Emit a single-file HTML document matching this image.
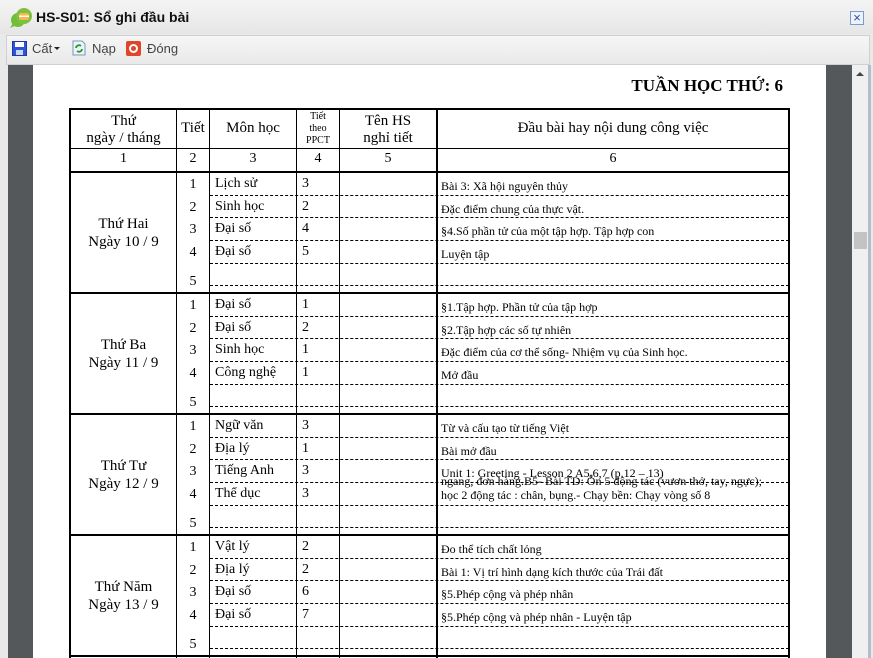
<!DOCTYPE html>
<html><head><meta charset="utf-8"><style>
*{margin:0;padding:0;box-sizing:border-box}
body{width:873px;height:658px;overflow:hidden;background:#e9e9e9;font-family:"Liberation Sans",sans-serif;position:relative}
.a{position:absolute}
.s{font-family:"Liberation Serif",serif;color:#000}
.hl{position:absolute;height:0;border-top:1px dashed #000}
.c{text-align:center}
</style></head><body>
<div class="a" style="left:0;top:0;width:873px;height:34px;background:linear-gradient(#f4f4f4,#e6e6e6)"></div>
<svg class="a" style="left:9px;top:7px" width="24" height="22" viewBox="0 0 24 22"><circle cx="9" cy="13" r="7" fill="#6fbf3a"/><circle cx="15" cy="9" r="8" fill="#7cc142"/><rect x="10" y="6" width="10" height="7" rx="2" fill="#f7b74a"/><rect x="10" y="8.5" width="10" height="1.5" fill="#fff"/><path d="M4 16 L1 21 L8 18Z" fill="#6fbf3a"/></svg>
<div class="a" style="left:36px;top:9px;font-size:14px;font-weight:bold;color:#111">HS-S01: Sổ ghi đầu bài</div>
<div class="a" style="left:850px;top:11px;width:14px;height:14px;border:1px solid #7b9bd0;background:#eef3fb;color:#2a4d9a;font-size:13px;line-height:12px;text-align:center">×</div>
<div class="a" style="left:6px;top:35px;width:864px;height:30px;background:linear-gradient(#f6f6f6,#e9e9e9);border:1px solid #d0d0d0"></div>
<svg class="a" style="left:12px;top:41px" width="15" height="15" viewBox="0 0 15 15"><rect x="0.5" y="0.5" width="14" height="14" fill="#2f55d4" stroke="#1c3aa0"/><rect x="3" y="1" width="9" height="5" fill="#fff"/><rect x="4" y="9" width="7" height="5" fill="#c9d6f5"/></svg>
<div class="a" style="left:32px;top:41px;font-size:13px;color:#444">Cất</div>
<div class="a" style="left:54px;top:47px;width:0;height:0;border-left:3px solid transparent;border-right:3px solid transparent;border-top:3px solid #222"></div>
<svg class="a" style="left:72px;top:40px" width="14" height="16" viewBox="0 0 14 16"><path d="M1 1H10L13 4V15H1Z" fill="#eef3fa" stroke="#7a96c0"/><path d="M4 8a3 3 0 0 1 5-2" stroke="#2a9b2a" stroke-width="1.8" fill="none"/><path d="M10 9a3 3 0 0 1-5 2" stroke="#2a9b2a" stroke-width="1.8" fill="none"/></svg>
<div class="a" style="left:92px;top:41px;font-size:13px;color:#444">Nạp</div>
<div class="a" style="left:126px;top:41px;width:15px;height:15px;background:#e0452a;border-radius:2px"></div>
<div class="a" style="left:129px;top:44px;width:9px;height:9px;border:2px solid #fff;border-radius:50%"></div>
<div class="a" style="left:147px;top:41px;font-size:13px;color:#444">Đóng</div>
<div class="a" style="left:8px;top:65px;width:844px;height:593px;background:#54585b"></div>
<div class="a" style="left:33px;top:65px;width:793px;height:593px;background:#fff"></div>
<div class="a" style="left:852px;top:65px;width:16px;height:593px;background:#f0f0f0"></div>
<div class="a" style="left:868px;top:65px;width:3px;height:593px;background:#b4bccb"></div>
<div class="a" style="left:856px;top:72px;width:0;height:0;border-left:4px solid transparent;border-right:4px solid transparent;border-bottom:4px solid #444"></div>
<div class="a" style="left:854px;top:232px;width:13px;height:17px;background:#c3c3c3"></div>

<div class="a s" style="left:560px;top:76px;width:223px;text-align:right;font-size:17px;font-weight:bold">TUẦN HỌC THỨ: 6</div>

<div class="a" style="left:69px;top:108px;width:721px;height:550px;border:2px solid #000;border-bottom:none"></div>
<div class="a" style="left:176px;top:108px;width:1px;height:550px;background:#000"></div>
<div class="a" style="left:209px;top:108px;width:1px;height:550px;background:#000"></div>
<div class="a" style="left:296px;top:108px;width:1px;height:550px;background:#000"></div>
<div class="a" style="left:339px;top:108px;width:1px;height:550px;background:#000"></div>
<div class="a" style="left:436px;top:108px;width:2px;height:550px;background:#000"></div>
<div class="a" style="left:69px;top:148px;width:721px;height:1px;background:#000"></div>
<div class="a" style="left:69px;top:171px;width:721px;height:2px;background:#000"></div>
<div class="a" style="left:69px;top:292px;width:721px;height:2px;background:#000"></div>
<div class="a" style="left:69px;top:413px;width:721px;height:2px;background:#000"></div>
<div class="a" style="left:69px;top:534px;width:721px;height:2px;background:#000"></div>
<div class="a" style="left:69px;top:655px;width:721px;height:2px;background:#000"></div>

<div class="a s c" style="left:71px;top:113px;width:105px;font-size:15px;line-height:17px">Thứ<br>ngày / tháng</div>
<div class="a s c" style="left:177px;top:120px;width:32px;font-size:15px">Tiết</div>
<div class="a s c" style="left:210px;top:120px;width:86px;font-size:15px">Môn học</div>
<div class="a s c" style="left:297px;top:111px;width:42px;font-size:10px;line-height:12px">Tiết<br>theo<br>PPCT</div>
<div class="a s c" style="left:340px;top:113px;width:96px;font-size:15px;line-height:17px">Tên HS<br>nghỉ tiết</div>
<div class="a s c" style="left:438px;top:120px;width:350px;font-size:15px">Đầu bài hay nội dung công việc</div>
<div class="a s c" style="left:71px;top:151px;width:105px;font-size:14px">1</div>
<div class="a s c" style="left:177px;top:151px;width:32px;font-size:14px">2</div>
<div class="a s c" style="left:210px;top:151px;width:86px;font-size:14px">3</div>
<div class="a s c" style="left:297px;top:151px;width:42px;font-size:14px">4</div>
<div class="a s c" style="left:340px;top:151px;width:96px;font-size:14px">5</div>
<div class="a s c" style="left:438px;top:151px;width:350px;font-size:14px">6</div>

<div class="hl" style="left:210px;width:579px;top:195px"></div><div class="hl" style="left:210px;width:579px;top:217px"></div><div class="hl" style="left:210px;width:579px;top:240px"></div><div class="hl" style="left:210px;width:579px;top:263px"></div><div class="hl" style="left:210px;width:579px;top:285px"></div>
<div class="hl" style="left:210px;width:579px;top:316px"></div><div class="hl" style="left:210px;width:579px;top:338px"></div><div class="hl" style="left:210px;width:579px;top:361px"></div><div class="hl" style="left:210px;width:579px;top:384px"></div><div class="hl" style="left:210px;width:579px;top:406px"></div>
<div class="hl" style="left:210px;width:579px;top:437px"></div><div class="hl" style="left:210px;width:579px;top:459px"></div><div class="hl" style="left:210px;width:579px;top:482px"></div><div class="hl" style="left:210px;width:579px;top:505px"></div><div class="hl" style="left:210px;width:579px;top:527px"></div>
<div class="hl" style="left:210px;width:579px;top:558px"></div><div class="hl" style="left:210px;width:579px;top:580px"></div><div class="hl" style="left:210px;width:579px;top:603px"></div><div class="hl" style="left:210px;width:579px;top:626px"></div><div class="hl" style="left:210px;width:579px;top:648px"></div>

<div class="a s c" style="left:71px;top:215px;width:105px;font-size:15px;line-height:18px">Thứ Hai<br>Ngày 10 / 9</div>
<div class="a s c" style="left:71px;top:336px;width:105px;font-size:15px;line-height:18px">Thứ Ba<br>Ngày 11 / 9</div>
<div class="a s c" style="left:71px;top:457px;width:105px;font-size:15px;line-height:18px">Thứ Tư<br>Ngày 12 / 9</div>
<div class="a s c" style="left:71px;top:578px;width:105px;font-size:15px;line-height:18px">Thứ Năm<br>Ngày 13 / 9</div>

<div class="a s c" style="left:177px;width:32px;font-size:14px;line-height:22.5px;top:174px">1<br>2<br>3<br>4</div><div class="a s c" style="left:177px;width:32px;font-size:14px;top:274px">5</div>
<div class="a s c" style="left:177px;width:32px;font-size:14px;line-height:22.5px;top:295px">1<br>2<br>3<br>4</div><div class="a s c" style="left:177px;width:32px;font-size:14px;top:395px">5</div>
<div class="a s c" style="left:177px;width:32px;font-size:14px;line-height:22.5px;top:416px">1<br>2<br>3<br>4</div><div class="a s c" style="left:177px;width:32px;font-size:14px;top:516px">5</div>
<div class="a s c" style="left:177px;width:32px;font-size:14px;line-height:22.5px;top:537px">1<br>2<br>3<br>4</div><div class="a s c" style="left:177px;width:32px;font-size:14px;top:637px">5</div>

<div class="a s" style="left:215px;top:173px;font-size:14px;line-height:22.7px">Lịch sử<br>Sinh học<br>Đại số<br>Đại số</div>
<div class="a s" style="left:302px;top:173px;font-size:14px;line-height:22.7px">3<br>2<br>4<br>5</div>
<div class="a s" style="left:441px;top:175px;font-size:12px;line-height:22.7px">Bài 3: Xã hội nguyên thủy<br>Đặc điểm chung của thực vật.<br>§4.Số phần tử của một tập hợp. Tập hợp con<br>Luyện tập</div>
<div class="a s" style="left:215px;top:294px;font-size:14px;line-height:22.7px">Đại số<br>Đại số<br>Sinh học<br>Công nghệ</div>
<div class="a s" style="left:302px;top:294px;font-size:14px;line-height:22.7px">1<br>2<br>1<br>1</div>
<div class="a s" style="left:441px;top:296px;font-size:12px;line-height:22.7px">§1.Tập hợp. Phần tử của tập hợp<br>§2.Tập hợp các số tự nhiên<br>Đặc điểm của cơ thể sống- Nhiệm vụ của Sinh học.<br>Mở đầu</div>
<div class="a s" style="left:215px;top:415px;font-size:14px;line-height:22.7px">Ngữ văn<br>Địa lý<br>Tiếng Anh<br>Thể dục</div>
<div class="a s" style="left:302px;top:415px;font-size:14px;line-height:22.7px">3<br>1<br>3<br>3</div>
<div class="a s" style="left:441px;top:417px;font-size:12px;line-height:22.7px">Từ và cấu tạo từ tiếng Việt<br>Bài mở đầu<br>Unit 1: Greeting - Lesson 2 A5,6,7 (p.12 – 13)</div>
<div class="a s" style="left:441px;top:474px;font-size:12px;line-height:14px;white-space:nowrap">ngang, đơn hàng.B5- Bài TD: Ôn 5 động tác (vươn thở, tay, ngực);<br>học 2 động tác : chân, bụng.- Chạy bền: Chạy vòng số 8</div>
<div class="a s" style="left:215px;top:536px;font-size:14px;line-height:22.7px">Vật lý<br>Địa lý<br>Đại số<br>Đại số</div>
<div class="a s" style="left:302px;top:536px;font-size:14px;line-height:22.7px">2<br>2<br>6<br>7</div>
<div class="a s" style="left:441px;top:538px;font-size:12px;line-height:22.7px">Đo thể tích chất lỏng<br>Bài 1: Vị trí hình dạng kích thước của Trái đất<br>§5.Phép cộng và phép nhân<br>§5.Phép cộng và phép nhân - Luyện tập</div>
</body></html>
